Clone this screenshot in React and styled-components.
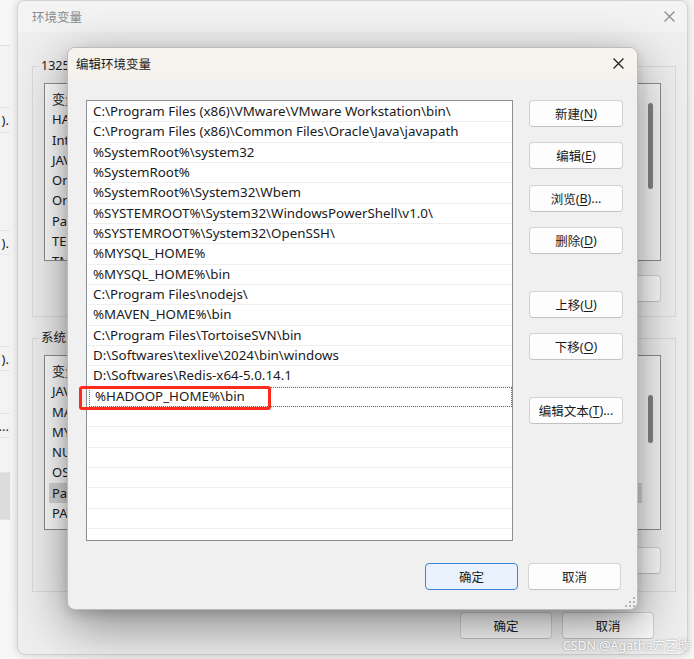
import React from "react";
import styled, { createGlobalStyle } from "styled-components";

const GlobalStyle = createGlobalStyle`
  html, body { margin: 0; padding: 0; }
  body {
    background: #f7f7f7;
    font-family: "Noto Sans", "Noto Sans CJK SC", sans-serif;
    font-size: 12.5px;
    color: #1b1b1b;
  }
  * { box-sizing: border-box; }
`;

const Desktop = styled.div`
  position: relative;
  width: 694px;
  height: 659px;
  overflow: hidden;
  background: #f7f7f7;
`;

// ---- window peeking in from the left ----
const SideWindow = styled.div`
  position: absolute;
  left: -190px;
  top: 45px;
  width: 200px;
  height: 475px;
  background: #f3f3f3;
  border-top: 1px solid #dedede;
  display: flex;
  flex-direction: column;
`;

const SideRow = styled.div`
  height: ${p => p.$h}px;
  flex: none;
  display: flex;
  align-items: center;
  justify-content: flex-end;
  padding-right: 1px;
  border-bottom: 1px solid #e4e4e4;
  background: ${p => (p.$shade ? "#dcdcdc" : "transparent")};
  white-space: nowrap;
  font-size: 13px;
`;

// ---- main "环境变量" window ----
const MainWindow = styled.div`
  position: absolute;
  left: 17px;
  top: 0;
  width: 671px;
  height: 655px;
  background: #efefef;
  border: 1px solid #d2d2d2;
  border-radius: 8px;
  box-shadow: 0 0 10px rgba(0, 0, 0, 0.16);
  overflow: hidden;
  display: flex;
  flex-direction: column;
`;

const MainTitle = styled.div`
  height: 31px;
  flex: none;
  display: flex;
  align-items: center;
  justify-content: space-between;
  padding: 0 12px 0 14px;
  background: #f3f3f3;
  color: #8a8a8a;
  font-size: 12.5px;
`;

const MainBody = styled.div`
  padding: 26px 11px 0 14px;
  display: flex;
  flex-direction: column;
`;

const Group = styled.fieldset`
  margin: 0 0 ${p => p.$mb || 0}px 0;
  padding: 9px 14px ${p => p.$pb}px 11px;
  border: 1px solid #dadada;
  border-radius: 0;
  min-width: 0;

  legend {
    margin-left: -5px;
    padding: 0 2px;
    line-height: 16px;
    font-size: 12.5px;
  }
`;

const VarList = styled.div`
  height: ${p => p.$h}px;
  border: 1px solid #8e8e8e;
  background: #fff;
  display: flex;
  overflow: hidden;
`;

const VarRows = styled.div`
  flex: 1;
  min-width: 0;
  display: flex;
  flex-direction: column;
  padding-top: 5px;
`;

const VarRow = styled.div`
  height: 20.3px;
  flex: none;
  margin-left: 4px;
  padding-left: 3px;
  line-height: 20px;
  font-size: 13px;
  white-space: nowrap;
  background: ${p => (p.$selected ? "#d9d9d9" : "transparent")};
`;

const ScrollTrack = styled.div`
  width: 18px;
  flex: none;
  padding: ${p => p.$top}px 0 0 6px;
  background: #f7f7f7;
`;

const ScrollThumb = styled.div`
  width: 5px;
  height: ${p => p.$h}px;
  border-radius: 3px;
  background: #858585;
`;

const ButtonRow = styled.div`
  display: flex;
  justify-content: flex-end;
  gap: 10px;
  margin-top: ${p => p.$mt}px;
  padding-right: ${p => p.$pr || 0}px;
`;

const WinButton = styled.div`
  width: ${p => p.$w || 94}px;
  height: 27px;
  flex: none;
  display: flex;
  align-items: center;
  justify-content: center;
  background: ${p => (p.$primary ? "#e9f2fc" : "#fdfdfd")};
  border: 1px solid ${p => (p.$primary ? "#3d82d4" : "#d3d3d3")};
  border-bottom-color: ${p => (p.$primary ? "#3d82d4" : "#c2c2c2")};
  border-radius: 4px;
  font-size: 12.5px;
  color: #1b1b1b;
  white-space: nowrap;
  margin-top: ${p => p.$mt || 0}px;

  u {
    text-underline-offset: 2px;
  }
`;

// ---- "编辑环境变量" dialog ----
const EditDialog = styled.div`
  position: absolute;
  left: 67px;
  top: 47px;
  width: 571px;
  background: #f0f0f0;
  border: 1px solid #bcbcbc;
  border-radius: 8px;
  box-shadow: 0 16px 52px rgba(0, 0, 0, 0.44), 0 4px 12px rgba(0, 0, 0, 0.14);
  overflow: hidden;
  display: flex;
  flex-direction: column;
`;

const DialogTitle = styled.div`
  height: 31px;
  flex: none;
  display: flex;
  align-items: center;
  justify-content: space-between;
  padding: 0 13px 0 8px;
  background: #f6f2ed;
  font-size: 12.5px;
  color: #1b1b1b;
`;

const DialogBody = styled.div`
  position: relative;
  padding: 21px 15px 19px 18px;
  display: flex;
  flex-direction: column;
`;

const TopRow = styled.div`
  display: flex;
  gap: 16px;
`;

const PathList = styled.div`
  width: 427px;
  height: 441px;
  flex: none;
  border: 1px solid #8c8f96;
  background: #fff;
  padding-top: 1px;
  overflow: hidden;
`;

const PathRow = styled.div`
  height: 20.33px;
  padding-left: 6px;
  line-height: 19px;
  border-bottom: 1px solid #efefef;
  white-space: nowrap;
  font-size: 13.35px;
  outline: ${p => (p.$focused ? "1px dotted #6a6a6a" : "none")};
  outline-offset: -1px;
  margin-left: ${p => (p.$focused ? "2px" : "0")};
`;

const ButtonColumn = styled.div`
  display: flex;
  flex-direction: column;
  gap: 15.33px;
`;

const BottomRow = styled.div`
  display: flex;
  justify-content: flex-end;
  gap: 10px;
  margin-top: 22px;
  padding-right: 1px;
`;

const Annotation = styled.div`
  position: absolute;
  left: 11px;
  top: 307px;
  width: 192px;
  height: 24px;
  border: 3px solid #ff2a1c;
  border-radius: 3px;
`;

const Grip = styled.svg`
  position: absolute;
  right: 2px;
  bottom: 2px;
`;

const Watermark = styled.div`
  position: absolute;
  right: 4px;
  bottom: 5px;
  font-size: 12.5px;
  color: rgba(255, 255, 255, 0.95);
  text-shadow: 0 0 2px rgba(60, 60, 60, 0.55);
  white-space: nowrap;
`;

const CloseIcon = ({ color, size }) => (
  <svg width={size} height={size} viewBox="0 0 10 10">
    <path d="M0.5 0.5L9.5 9.5M9.5 0.5L0.5 9.5" stroke={color} strokeWidth="1.1" fill="none" />
  </svg>
);

const userVars = ["变量", "HADOOP_HOME", "IntelliJ IDEA", "JAVA_HOME", "OneDrive", "OneDriveConsumer", "Path", "TEMP", "TMP"];
const sysVars = ["变量", "JAVA_HOME", "MAVEN_HOME", "MYSQL_HOME", "NUMBER_OF_PROCESSORS", "OS", "Path", "PATHEXT", "PROCESSOR_ARCHITECTURE"];

const paths = [
  "C:\\Program Files (x86)\\VMware\\VMware Workstation\\bin\\",
  "C:\\Program Files (x86)\\Common Files\\Oracle\\Java\\javapath",
  "%SystemRoot%\\system32",
  "%SystemRoot%",
  "%SystemRoot%\\System32\\Wbem",
  "%SYSTEMROOT%\\System32\\WindowsPowerShell\\v1.0\\",
  "%SYSTEMROOT%\\System32\\OpenSSH\\",
  "%MYSQL_HOME%",
  "%MYSQL_HOME%\\bin",
  "C:\\Program Files\\nodejs\\",
  "%MAVEN_HOME%\\bin",
  "C:\\Program Files\\TortoiseSVN\\bin",
  "D:\\Softwares\\texlive\\2024\\bin\\windows",
  "D:\\Softwares\\Redis-x64-5.0.14.1",
  "%HADOOP_HOME%\\bin",
];

const rows = [...paths, ...Array(7).fill("")];

const sideRows = [
  { h: 62, t: "" },
  { h: 25, t: ")." },
  { h: 98, t: "" },
  { h: 24, t: ")." },
  { h: 92, t: "" },
  { h: 24, t: ")." },
  { h: 43, t: "" },
  { h: 24, t: "..." },
  { h: 35, t: "" },
  { h: 47, t: "", shade: true },
];

function Mn({ label, k, tail = "" }) {
  return (
    <>
      {label}(<u>{k}</u>){tail}
    </>
  );
}

export default function App() {
  return (
    <Desktop>
      <GlobalStyle />

      <SideWindow>
        {sideRows.map((r, i) => (
          <SideRow key={i} $h={r.h} $shade={r.shade}>{r.t}</SideRow>
        ))}
      </SideWindow>

      <MainWindow>
        <MainTitle>
          <span>环境变量</span>
          <CloseIcon color="#8a8a8a" size={11} />
        </MainTitle>
        <MainBody>
          <Group $pb={14} $mb={13}>
            <legend>13253 的用户变量(U)</legend>
            <VarList $h={178}>
              <VarRows>
                {userVars.map(v => (
                  <VarRow key={v}>{v}</VarRow>
                ))}
              </VarRows>
              <ScrollTrack $top={19}>
                <ScrollThumb $h={86} />
              </ScrollTrack>
            </VarList>
            <ButtonRow $mt={14}>
              <WinButton $w={93}>新建(N)...</WinButton>
              <WinButton $w={93}>编辑(E)...</WinButton>
              <WinButton $w={93}>删除(D)</WinButton>
            </ButtonRow>
          </Group>
          <Group $pb={17}>
            <legend>系统变量(S)</legend>
            <VarList $h={175}>
              <VarRows>
                {sysVars.map(v => (
                  <VarRow key={v} $selected={v === "Path"}>{v}</VarRow>
                ))}
              </VarRows>
              <ScrollTrack $top={39}>
                <ScrollThumb $h={48} />
              </ScrollTrack>
            </VarList>
            <ButtonRow $mt={17}>
              <WinButton $w={93}>新建(W)...</WinButton>
              <WinButton $w={93}>编辑(I)...</WinButton>
              <WinButton $w={93}>删除(L)</WinButton>
            </ButtonRow>
          </Group>
          <ButtonRow $mt={20} $pr={22}>
            <WinButton $w={92}>确定</WinButton>
            <WinButton $w={92}>取消</WinButton>
          </ButtonRow>
        </MainBody>
      </MainWindow>

      <EditDialog>
        <DialogTitle>
          <span>编辑环境变量</span>
          <CloseIcon color="#1f1f1f" size={11} />
        </DialogTitle>
        <DialogBody>
          <TopRow>
            <PathList>
              {rows.map((p, i) => (
                <PathRow key={i} $focused={i === 14}>{p}</PathRow>
              ))}
            </PathList>
            <ButtonColumn>
              <WinButton><Mn label="新建" k="N" /></WinButton>
              <WinButton><Mn label="编辑" k="E" /></WinButton>
              <WinButton><Mn label="浏览" k="B" tail="..." /></WinButton>
              <WinButton><Mn label="删除" k="D" /></WinButton>
              <WinButton $mt={21.7}><Mn label="上移" k="U" /></WinButton>
              <WinButton><Mn label="下移" k="O" /></WinButton>
              <WinButton $mt={21.7}><Mn label="编辑文本" k="T" tail="..." /></WinButton>
            </ButtonColumn>
          </TopRow>
          <BottomRow>
            <WinButton $w={93} $primary>确定</WinButton>
            <WinButton $w={93}>取消</WinButton>
          </BottomRow>
          <Annotation />
        </DialogBody>
        <Grip width="10" height="10" viewBox="0 0 10 10">
          <rect x="8" y="0" width="2" height="2" fill="#b5b5b5" />
          <rect x="8" y="4" width="2" height="2" fill="#b5b5b5" />
          <rect x="4" y="4" width="2" height="2" fill="#b5b5b5" />
          <rect x="8" y="8" width="2" height="2" fill="#b5b5b5" />
          <rect x="4" y="8" width="2" height="2" fill="#b5b5b5" />
          <rect x="0" y="8" width="2" height="2" fill="#b5b5b5" />
        </Grip>
      </EditDialog>

      <Watermark>CSDN @Agatha方艺璇</Watermark>
    </Desktop>
  );
}
